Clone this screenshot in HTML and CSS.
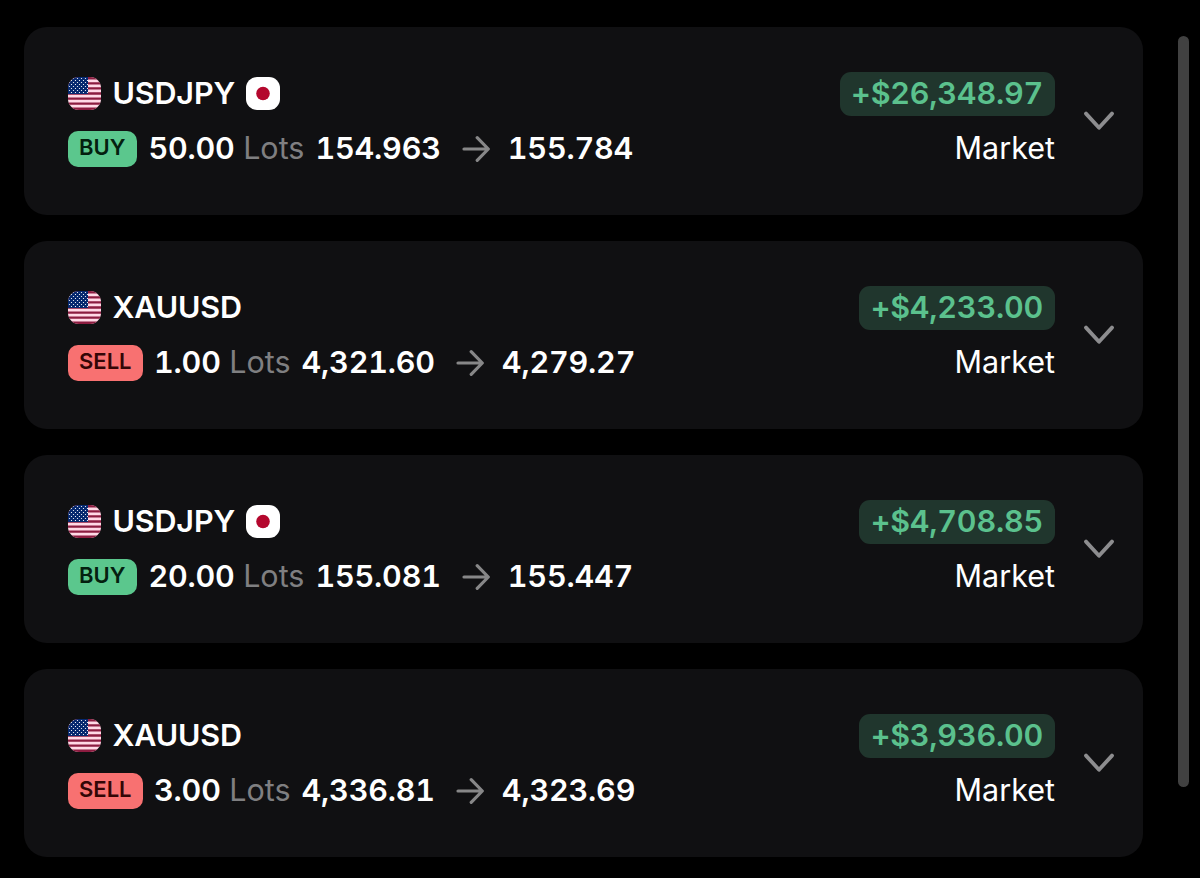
FILE: index.html
```
<!doctype html>
<html lang="en">
<head>
	<meta charset="UTF-8">
	<title>Positions</title>
	<link rel="stylesheet" href="styles.css">
</head>
<body>
	<svg class="defs" width="0" height="0">
		<defs>
			<pattern id="stars" width="4" height="4" patternUnits="userSpaceOnUse">
				<circle cx="1.5" cy="1.5" r="0.6" fill="#fff"/>
				<circle cx="3.5" cy="3.5" r="0.6" fill="#fff"/>
			</pattern>
			<symbol id="us" viewBox="0 0 33 33">
				<rect width="33" height="33" fill="#ffd9e6"/>
				<path d="M0 1.27H33M0 6.35H33M0 11.42H33M0 16.5H33M0 21.58H33M0 26.65H33M0 31.73H33" stroke="#8c1c40" stroke-width="2.4"/>
				<rect width="20" height="17" fill="#06296f"/>
				<rect width="20" height="17" fill="url(#stars)"/>
			</symbol>
			<symbol id="jp" viewBox="0 0 34 33">
				<rect width="34" height="33" fill="#fff"/>
				<circle cx="17" cy="16.5" r="6.8" fill="#b4072d"/>
			</symbol>
			<symbol id="arrow" viewBox="0 0 28 28">
				<path d="M2 14H26M15.2 2.7L26.3 14L15.2 25.3" fill="none" stroke="#878788" stroke-width="3.2" stroke-linecap="round" stroke-linejoin="round"/>
			</symbol>
			<symbol id="chevron" viewBox="0 0 30 20">
				<path d="M2 2.6L15 16.8L28 2.6" fill="none" stroke="#8d8d8f" stroke-width="3.8" stroke-linecap="round" stroke-linejoin="round"/>
			</symbol>
		</defs>
	</svg>

	<main class="page">
		<div class="positions">
			<div class="card">
				<div class="info">
					<div class="row pair">
						<svg class="flag"><use href="#us"/></svg>
						<span class="symbol">USDJPY</span>
						<svg class="flag flag-jp"><use href="#jp"/></svg>
					</div>
					<div class="row deal">
						<span class="side buy">BUY</span>
						<span class="num lots">50.00</span>
						<span class="unit">Lots</span>
						<span class="num">154.963</span>
						<svg class="arrow"><use href="#arrow"/></svg>
						<span class="num">155.784</span>
					</div>
				</div>
				<div class="result">
					<div class="profit">+$26,348.97</div>
					<div class="row type">Market</div>
				</div>
				<svg class="chevron"><use href="#chevron"/></svg>
			</div>

			<div class="card">
				<div class="info">
					<div class="row pair">
						<svg class="flag"><use href="#us"/></svg>
						<span class="symbol">XAUUSD</span>
					</div>
					<div class="row deal">
						<span class="side sell">SELL</span>
						<span class="num lots">1.00</span>
						<span class="unit">Lots</span>
						<span class="num">4,321.60</span>
						<svg class="arrow"><use href="#arrow"/></svg>
						<span class="num">4,279.27</span>
					</div>
				</div>
				<div class="result">
					<div class="profit">+$4,233.00</div>
					<div class="row type">Market</div>
				</div>
				<svg class="chevron"><use href="#chevron"/></svg>
			</div>

			<div class="card">
				<div class="info">
					<div class="row pair">
						<svg class="flag"><use href="#us"/></svg>
						<span class="symbol">USDJPY</span>
						<svg class="flag flag-jp"><use href="#jp"/></svg>
					</div>
					<div class="row deal">
						<span class="side buy">BUY</span>
						<span class="num lots">20.00</span>
						<span class="unit">Lots</span>
						<span class="num">155.081</span>
						<svg class="arrow"><use href="#arrow"/></svg>
						<span class="num">155.447</span>
					</div>
				</div>
				<div class="result">
					<div class="profit">+$4,708.85</div>
					<div class="row type">Market</div>
				</div>
				<svg class="chevron"><use href="#chevron"/></svg>
			</div>

			<div class="card">
				<div class="info">
					<div class="row pair">
						<svg class="flag"><use href="#us"/></svg>
						<span class="symbol">XAUUSD</span>
					</div>
					<div class="row deal">
						<span class="side sell">SELL</span>
						<span class="num lots">3.00</span>
						<span class="unit">Lots</span>
						<span class="num">4,336.81</span>
						<svg class="arrow"><use href="#arrow"/></svg>
						<span class="num">4,323.69</span>
					</div>
				</div>
				<div class="result">
					<div class="profit">+$3,936.00</div>
					<div class="row type">Market</div>
				</div>
				<svg class="chevron"><use href="#chevron"/></svg>
			</div>
		</div>
		<div class="scrollbar"></div>
	</main>
</body>
</html>
```
FILE: styles.css
```
* {
	box-sizing: border-box;
}
body {
	margin: 0;
	background: #000;
	color: #fff;
	font: 30.5px/42px Inter, sans-serif;
	overflow: hidden;
}
.defs {
	display: block;
}
.page {
	display: flex;
	height: 878px;
	padding: 27px 11px 0 24px;
}
/* list of cards */
.positions {
	display: flex;
	flex-direction: column;
	gap: 26px;
	width: 1119px;
}
.card {
	display: flex;
	height: 188px;
	padding: 44.6px 29px 0 44px;
	border-radius: 23px;
	background: #101012;
}
.info {
	flex: 1;
}
.row {
	display: flex;
	align-items: center;
	height: 44px;
	white-space: nowrap;
}
.pair {
	margin-bottom: 11px;
}
.flag {
	width: 33px;
	height: 33px;
	border-radius: 11px;
}
.flag-jp {
	width: 34px;
}
.symbol {
	height: 44px;
	margin: 0 11px 0 11.5px;
	font-weight: 560;
	letter-spacing: -0.15px;
}
/* buy / sell label */
.side {
	height: 36px;
	margin-right: 11.5px;
	padding: 0 11px;
	border-radius: 10px;
	font-size: 22px;
	font-weight: 600;
	line-height: 33px;
}
.buy {
	padding-right: 11.5px;
	background: #5bc78d;
	color: #04200f;
}
.sell {
	background: #f87171;
	color: #330606;
}
.num {
	height: 44px;
	font-weight: 640;
	font-variant-numeric: tabular-nums;
	letter-spacing: -0.18px;
}
.lots {
	margin-right: 8.5px;
}
.unit {
	height: 44px;
	margin-right: 11px;
	color: #7f7f81;
}
.arrow {
	width: 28px;
	height: 28px;
	margin: 0 18px 0 21px;
}
.result {
	display: flex;
	flex-direction: column;
	align-items: flex-end;
	gap: 11px;
}
.profit {
	height: 44px;
	padding: 0 12px 0 11.5px;
	border-radius: 11px;
	background: #20362d;
	color: #5bc18d;
	font-weight: 630;
	font-variant-numeric: tabular-nums;
	letter-spacing: -0.2px;
}
.type {
	height: 42px;
}
.chevron {
	width: 30px;
	height: 20px;
	margin: 39px 0 0 29px;
}
.scrollbar {
	width: 11px;
	height: 751px;
	margin: 9px 0 0 auto;
	border-radius: 6px;
	background: #414141;
}
```
